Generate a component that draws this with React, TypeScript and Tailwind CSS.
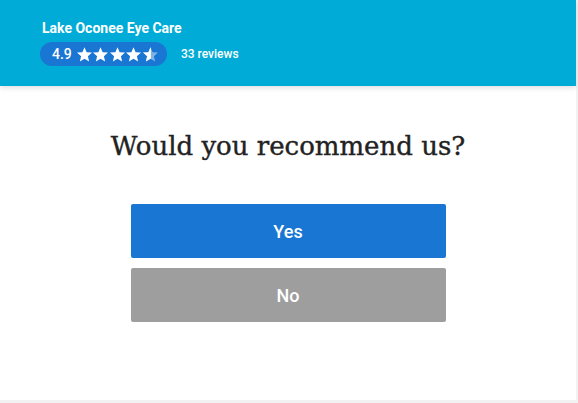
import * as React from "react";

function Star({ half = false }: { half?: boolean }) {
  const d =
    "M12 17.27L18.18 21l-1.64-7.03L22 9.24l-7.19-.61L12 2 9.19 8.63 2 9.24l5.46 4.73L5.82 21z";
  return (
    <svg viewBox="2 2 20 19.5" className="h-[15px] w-[15px]">
      {half ? (
        <>
          <defs>
            <clipPath id="half-left">
              <rect x="0" y="0" width="12.5" height="24" />
            </clipPath>
          </defs>
          <path d={d} fill="#ffffff" fillOpacity="0.45" />
          <path d={d} fill="#ffffff" clipPath="url(#half-left)" />
        </>
      ) : (
        <path d={d} fill="#ffffff" />
      )}
    </svg>
  );
}

export default function App() {
  return (
    <div className="h-[403px] w-[578px] bg-[#f2f2f2] font-['Roboto',sans-serif]">
      <div className="flex h-[400px] w-[576px] flex-col bg-white">
        <div className="relative z-10 h-[86px] bg-[#00acd7] pl-[40px] pt-[20px] shadow-[0_2px_5px_rgba(0,0,0,0.12)]">
          <p className="pl-[2px] text-[14px] font-bold leading-[17px] text-white">Lake Oconee Eye Care</p>
          <div className="mt-[5px] flex items-center">
            <div className="flex h-[24px] w-[127px] items-center rounded-full bg-[#1976d2] pl-[12px]">
              <span className="mr-[5px] text-[14px] font-medium text-white">4.9</span>
              <div className="flex gap-[1.5px]">
                <Star />
                <Star />
                <Star />
                <Star />
                <Star half />
              </div>
            </div>
            <span className="ml-[14px] text-[12px] font-medium text-white">33 reviews</span>
          </div>
        </div>

        <div className="flex flex-col items-center pt-[42px]">
          <h1 className="font-['DejaVu_Serif',serif] text-[26px] leading-[36px] text-[#222222] [-webkit-text-stroke:0.4px_#222222]">
            Would you recommend us?
          </h1>
          <div className="mt-[40px] flex w-[315px] flex-col gap-[10px]">
            <button className="h-[54px] rounded-[2px] bg-[#1976d2] text-[18px] font-medium text-white">Yes</button>
            <button className="h-[54px] rounded-[2px] bg-[#9e9e9e] text-[18px] font-medium text-white">No</button>
          </div>
        </div>
      </div>
    </div>
  );
}
